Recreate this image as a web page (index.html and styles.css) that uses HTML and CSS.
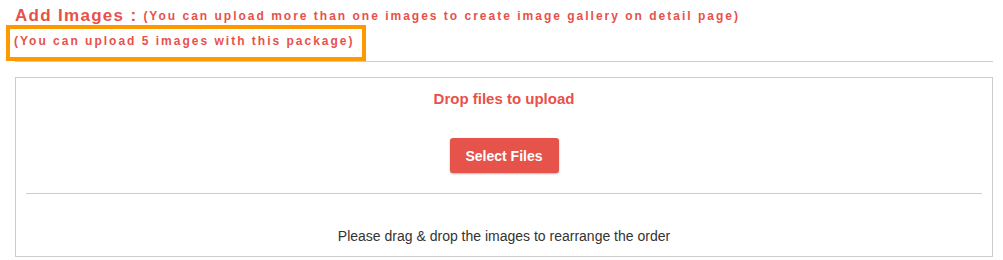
FILE: index.html
```html
<!DOCTYPE html>
<html>
<head>
    <title>Add Images</title>
    <link rel="stylesheet" href="styles.css">
</head>
<body>

    <div class="section">
        <h3 class="title">Add Images : <span class="hint">(You can upload more than one images to create image gallery on detail page)</span></h3>
        <div class="note">(You can upload 5 images with this package)</div>
        <hr class="rule">

        <div class="dropzone">
            <div class="drop-text">Drop files to upload</div>
            <button class="btn">Select Files</button>
            <hr class="inner-rule">
            <p class="order-text">Please drag &amp; drop the images to rearrange the order</p>
        </div>
    </div>

</body>
</html>
```

FILE: styles.css
```css
body {
    margin: 0;
    font-family: "Liberation Sans", Arial, sans-serif;
    background: #fff;
}
.section {
    padding: 0 10px 0 15px;
}
.title {
    margin: 0;
    padding-top: 6px;
    font-size: 17px;
    line-height: 20px;
    letter-spacing: 1.3px;
    color: #e8514a;
    font-weight: bold;
}
.hint {
    font-size: 12px;
    letter-spacing: 2px;
    vertical-align: 1px;
}
.note {
    width: fit-content;
    margin-left: -9px;
    margin-top: -1px;
    padding: 6px 7px 9px 4px;
    border: 4px solid #ff9900;
    font-size: 12px;
    line-height: 13px;
    letter-spacing: 2px;
    font-weight: bold;
    color: #e8514a;
}
.rule {
    margin: 0;
    border: 0;
    border-top: 1px solid #ccc;
}
.dropzone {
    margin-top: 15px;
    border: 1px solid #ccc;
    height: 178px;
    text-align: center;
    padding: 0 10px;
}
.drop-text {
    margin-top: 11px;
    font-size: 15px;
    line-height: 20px;
    font-weight: bold;
    color: #e8514a;
}
.btn {
    margin-top: 29px;
    width: 109px;
    height: 35px;
    border: 0;
    border-radius: 3px;
    background: #e5534a;
    color: #fff;
    font-family: "Liberation Sans", Arial, sans-serif;
    font-size: 14px;
    font-weight: bold;
    box-shadow: 0 1px 2px rgba(0, 0, 0, 0.3);
    cursor: pointer;
}
.inner-rule {
    margin: 20px 0 0 0;
    border: 0;
    border-top: 1px solid #ccc;
}
.order-text {
    margin: 34px 0 0 0;
    font-size: 14px;
    line-height: 17px;
    color: #333;
}
```
